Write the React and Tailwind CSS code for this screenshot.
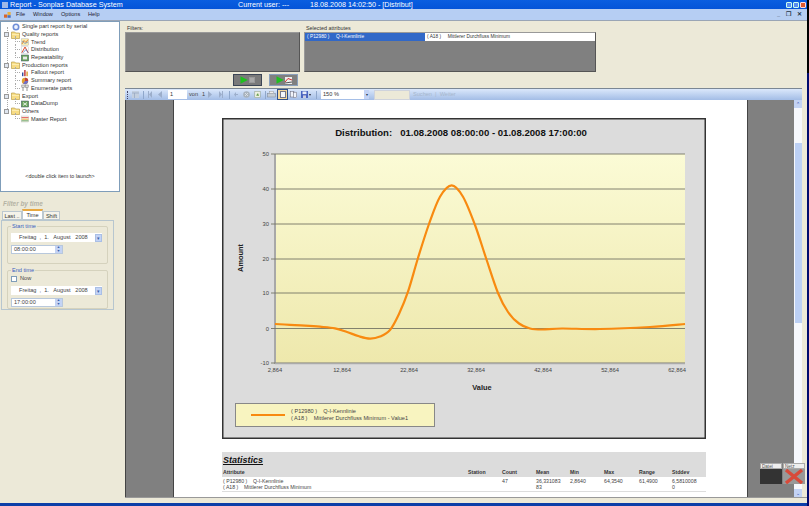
const FONT = { fontFamily: '"Liberation Sans", Arial, sans-serif' };

function Ic({ kind }) {
  if (kind === "folder")
    return (
      <svg viewBox="0 0 9 8" className="w-[9px] h-[8px] shrink-0">
        <path d="M0.5 2V1h3.2l1 1h3.8v5.5h-8z" fill="#f7dc84" stroke="#b09238" strokeWidth="0.6" />
        <path d="M1 3.4h7" stroke="#fff2c0" strokeWidth="0.8" />
      </svg>
    );
  if (kind === "gear")
    return (
      <svg viewBox="0 0 8 8" className="w-[8px] h-[8px] shrink-0">
        <circle cx="4" cy="4" r="2.7" fill="#eef3ff" stroke="#6f8fd8" strokeWidth="1.6" />
      </svg>
    );
  const body = {
    trend: (
      <>
        <rect x="0.3" y="0.8" width="7.4" height="6.4" fill="#f8ecb0" stroke="#aaa" strokeWidth="0.4" />
        <path d="M1 6 L3 2.5 L5 4.5 L7 1.5" fill="none" stroke="#e08030" strokeWidth="0.9" />
        <path d="M1 3 L4 5.5 L7 4" fill="none" stroke="#5080c0" strokeWidth="0.6" />
      </>
    ),
    dist: (
      <>
        <rect x="0.3" y="0.8" width="7.4" height="6.4" fill="#fff" stroke="#bbb" strokeWidth="0.4" />
        <path d="M0.8 6.8 L4 1 L7.2 6.8" fill="none" stroke="#e05030" strokeWidth="1" />
        <path d="M2 6.8 L5 3.5 L7 6.8" fill="none" stroke="#4070c0" strokeWidth="0.7" />
      </>
    ),
    rep: (
      <>
        <rect x="0.3" y="1" width="7.4" height="6" fill="#6aa55c" stroke="#456" strokeWidth="0.5" />
        <rect x="2" y="2.6" width="4" height="2.8" fill="#e8e8e8" />
      </>
    ),
    fall: (
      <>
        <rect x="1" y="3.5" width="1.4" height="3.7" fill="#3050a0" />
        <rect x="3.2" y="1" width="1.4" height="6.2" fill="#c03030" />
        <rect x="5.4" y="2.5" width="1.4" height="4.7" fill="#d9a030" />
      </>
    ),
    sum: (
      <>
        <circle cx="4" cy="4" r="3.2" fill="#e0a030" />
        <path d="M4 4 L4 0.8 A3.2 3.2 0 0 1 7.2 4z" fill="#c04040" />
        <path d="M4 4 L7.2 4 A3.2 3.2 0 0 1 2 6.5z" fill="#7070c8" />
      </>
    ),
    enum: (
      <>
        <rect x="0.8" y="1" width="2.6" height="2.6" fill="#ddd" stroke="#777" strokeWidth="0.5" />
        <rect x="4.6" y="1" width="2.6" height="2.6" fill="#ddd" stroke="#777" strokeWidth="0.5" />
        <path d="M2 3.6v3.4M6 3.6v3.4" stroke="#777" strokeWidth="0.8" />
      </>
    ),
    dump: (
      <>
        <rect x="0.3" y="1" width="7.4" height="6" fill="#6aa55c" stroke="#456" strokeWidth="0.5" />
        <path d="M2 2.5l4 3M6 2.5l-4 3" stroke="#fff" strokeWidth="0.8" />
      </>
    ),
    master: (
      <>
        <rect x="0.3" y="1" width="7.4" height="6" fill="#f8f4e8" stroke="#bbb" strokeWidth="0.4" />
        <path d="M0.5 2.6h7" stroke="#e05050" strokeWidth="0.9" />
        <path d="M0.5 4.2h7" stroke="#e8b040" strokeWidth="0.9" />
        <path d="M0.5 5.8h7" stroke="#60a060" strokeWidth="0.9" />
      </>
    ),
  }[kind];
  return (
    <svg viewBox="0 0 8 8" className="w-[8px] h-[8px] shrink-0">
      {body}
    </svg>
  );
}

const tree = [
  { t: "Single part report by serial", k: "gear", root: true, none: true },
  { t: "Quality reports", k: "folder", root: true },
  { t: "Trend", k: "trend" },
  { t: "Distribution", k: "dist" },
  { t: "Repeatability", k: "rep" },
  { t: "Production reports", k: "folder", root: true },
  { t: "Fallout report", k: "fall" },
  { t: "Summary report", k: "sum" },
  { t: "Enumerate parts", k: "enum" },
  { t: "Export", k: "folder", root: true },
  { t: "DataDump", k: "dump" },
  { t: "Others", k: "folder", root: true },
  { t: "Master Report", k: "master" },
];

function Tree() {
  return (
    <div className="flex flex-col h-[171px] bg-white border border-[#7f9db9] pt-[1px] relative">
      <span className="absolute left-[6px] top-[5px] h-[84px] border-l border-dotted border-[#aaa]" />
      {tree.map((r) => (
        <div key={r.t} className={`relative flex items-center h-[7.7px] gap-[2px] ${r.root ? (r.none ? "pl-[11px]" : "pl-[3px]") : "pl-[20px]"}`}>
          {!r.root && <span className="absolute left-[14px] top-[-2px] w-[5px] h-[6px] border-l border-b border-dotted border-[#aaa]" />}
          {r.root && !r.none && (
            <span className="relative w-[5px] h-[5px] border border-[#9a9a9a] bg-[#dfe6f0] shrink-0" />
          )}
          <Ic kind={r.k} />
          <span className="text-[5.6px] leading-[7px] text-[#333] whitespace-nowrap">{r.t}</span>
        </div>
      ))}
      <div className="mt-[50px] text-center text-[5.4px] leading-[7px] text-[#333]">&lt;double click item to launch&gt;</div>
    </div>
  );
}

function DateField() {
  return (
    <div className="flex items-center w-[91px] h-[9px] bg-white text-[5.6px] text-[#444] pl-[8px]">
      <span className="flex-1 whitespace-pre">Freitag  ,  1.   August   2008</span>
      <span className="w-[7px] h-[8px] bg-[#c3d3f5] border border-[#a9bfe6] text-[#3b5ea8] text-[5px] leading-[6px] text-center">▾</span>
    </div>
  );
}

function TimeField({ v }) {
  return (
    <div className="flex items-center w-[52px] h-[9px] bg-white border border-[#b8c8dc] text-[5.6px] text-[#444] pl-[2px]">
      <span className="flex-1">{v}</span>
      <span className="w-[7px] h-[7px] bg-[#c3d3f5] flex flex-col text-[#3b5ea8] text-[3.5px] leading-[3.5px] text-center">
        <span>▲</span>
        <span>▼</span>
      </span>
    </div>
  );
}

function Group({ label, children, h }) {
  return (
    <div className={`relative ${h} border border-[#d5d2bd] rounded-[2px] pl-[3px] flex flex-col`}>
      <span className="absolute -top-[4px] left-[3px] bg-[#ece9d8] text-[5.6px] leading-[7px] text-[#3a5fc0] px-[1px]">{label}</span>
      {children}
    </div>
  );
}

function LeftPanel() {
  return (
    <div className="w-[120px] shrink-0 flex flex-col">
      <Tree />
      <div className="pl-[3px] pt-[8px] text-[6.4px] leading-[8px] font-bold italic text-[#b5b3a4]">Filter by time</div>
      <div className="flex pl-[2px] mt-[2px] h-[10px] items-end text-[5.6px] text-[#333]">
        <span className="w-[20px] h-[9px] bg-[#f5f3ea] border border-[#bcc8d0] text-center leading-[8px]">Last ..</span>
        <span className="w-[21px] h-[11px] bg-white border border-[#bcc8d0] border-t-2 border-t-[#e8a840] text-center leading-[8px]">Time</span>
        <span className="w-[17px] h-[9px] bg-[#f5f3ea] border border-[#bcc8d0] text-center leading-[8px]">Shift</span>
      </div>
      <div className="ml-[1px] w-[113px] h-[90px] border border-[#b7c6cf] px-[5px] pt-[5px] flex flex-col gap-[6px]">
        <Group label="Start time" h="h-[39px]">
          <div className="pt-[6px] flex flex-col gap-[3px]">
            <DateField />
            <TimeField v="08:00:00" />
          </div>
        </Group>
        <Group label="End time" h="h-[40px]">
          <div className="pt-[4px] flex items-center gap-[3px] h-[11px] text-[5.6px] text-[#444]">
            <span className="w-[6px] h-[6px] bg-white border border-[#7f9db9]" />
            Now
          </div>
          <div className="pt-[4px] flex flex-col gap-[3px]">
            <DateField />
            <TimeField v="17:00:00" />
          </div>
        </Group>
      </div>
    </div>
  );
}

function PlayBtn({ active, icon }) {
  return (
    <div className={`w-[29px] h-[12px] flex items-center justify-center gap-[1px] border ${active ? "bg-[#7a7a7a] border-[#3c4656]" : "bg-[#808080] border-[#8aa0bc]"}`}>
      <svg viewBox="0 0 8 8" className="w-[8px] h-[8px]"><path d="M0.5 0.3 L7.8 4 L0.5 7.7z" fill="#1fc01f" /></svg>
      {icon === "grid" ? (
        <span className="w-[6px] h-[6px] bg-[#a8a8a8] border border-[#999]" />
      ) : (
        <svg viewBox="0 0 7 7" className="w-[7px] h-[7px]">
          <rect width="7" height="7" fill="#eee" />
          <path d="M0 5 L3 1.5 L7 3" stroke="#d03030" fill="none" />
          <path d="M0 6 L7 5" stroke="#555" fill="none" />
        </svg>
      )}
    </div>
  );
}

function Tri({ d, ml }) {
  return (
    <svg viewBox="0 0 4 7" className={`w-[4px] h-[7px] shrink-0 ${ml}`}>
      <path d={d} fill="#9caecb" />
    </svg>
  );
}

function Sep({ ml }) {
  return <span className={`w-[1px] h-[8px] bg-[#8fa7cb] shrink-0 ${ml}`} />;
}

function Toolbar() {
  return (
    <div className="h-[12px] shrink-0 mr-[7px] flex items-center bg-gradient-to-b from-[#dbe8fb] to-[#a3bde6] border-t border-[#7b8794] text-[5.6px] text-[#5a6f90]">
      <span className="w-[1px] h-[8px] ml-[2px] border-l border-dotted border-[#446] shrink-0" />
      <svg viewBox="0 0 7 7" className="w-[7px] h-[7px] ml-[4px] shrink-0"><rect width="7" height="7" fill="#c3cfdf" /><path d="M0 2h7M2.5 2v5" stroke="#93a5c0" strokeWidth="0.7" /></svg>
      <Sep ml="ml-[4px]" />
      <Tri ml="ml-[4px]" d="M0 0h1v7H0z M4 0v7L1 3.5z" />
      <Tri ml="ml-[6px]" d="M4 0v7L0 3.5z" />
      <span className="w-[19px] h-[9px] ml-[6px] bg-white text-[#333] pl-[2px] leading-[9px] shrink-0">1</span>
      <span className="w-[13px] ml-[2px] text-[#444] shrink-0">von</span>
      <span className="w-[4px] text-[#444] shrink-0">1</span>
      <Tri ml="ml-[2px]" d="M0 0v7L4 3.5z" />
      <Tri ml="ml-[7px]" d="M3 0h1v7H3z M0 0v7L3 3.5z" />
      <Sep ml="ml-[6px]" />
      <Tri ml="ml-[4px]" d="M4 1.5v1.5H2V1L0 3.5 2 6V4h2v1z" />
      <svg viewBox="0 0 7 7" className="w-[7px] h-[7px] ml-[5px] shrink-0"><circle cx="3.5" cy="3.5" r="3.3" fill="#a9b3bd" /><path d="M2 2l3 3M5 2L2 5" stroke="#e4e8ee" strokeWidth="0.8" /></svg>
      <svg viewBox="0 0 7 7" className="w-[7px] h-[7px] ml-[4px] shrink-0"><rect x="0.8" y="0.3" width="5.4" height="6.4" fill="#eef2e4" stroke="#8a9a80" strokeWidth="0.5" /><path d="M2 4.5L4 2l1 3z" fill="#6aa050" /></svg>
      <Sep ml="ml-[4px]" />
      <svg viewBox="0 0 9 7" className="w-[9px] h-[7px] ml-[1px] shrink-0"><rect x="0.5" y="2.5" width="8" height="3.5" fill="#c4ccd4" stroke="#7c8694" strokeWidth="0.5" /><rect x="2.5" y="0.3" width="4" height="2.2" fill="#eee" stroke="#888" strokeWidth="0.4" /></svg>
      <span className="w-[11px] h-[11px] ml-[1px] bg-[#f5d79a] border border-[#30508a] flex items-center justify-center shrink-0">
        <span className="w-[6px] h-[7px] bg-[#f4f6fb] border border-[#778]" />
      </span>
      <svg viewBox="0 0 7 7" className="w-[7px] h-[7px] ml-[2px] shrink-0"><rect x="0.3" y="0.5" width="3.6" height="5.5" fill="#f0f3fa" stroke="#667" strokeWidth="0.5" /><rect x="3.4" y="1.2" width="3.3" height="5.5" fill="#f0f3fa" stroke="#667" strokeWidth="0.5" /></svg>
      <svg viewBox="0 0 7 7" className="w-[7px] h-[7px] ml-[4px] shrink-0"><rect width="7" height="7" fill="#4a64c0" /><rect x="1.5" y="0.5" width="4" height="2.6" fill="#e8ecf8" /><rect x="2" y="4.4" width="3" height="2.6" fill="#ccd" /></svg>
      <svg viewBox="0 0 2 2" className="w-[2px] h-[2px] ml-[1px] shrink-0"><path d="M0 0h2L1 2z" fill="#223" /></svg>
      <Sep ml="ml-[5px]" />
      <div className="w-[48px] h-[9px] ml-[4px] bg-white flex items-center text-[#333] pl-[2px] relative shrink-0">
        150 %
        <span className="absolute right-0 top-0 w-[5px] h-[9px] bg-[#c3d3f5] text-[4px] leading-[9px] text-center text-[#234]">▾</span>
      </div>
      <span className="w-[36px] h-[10px] bg-[#ece9d8] ml-[5px] border border-[#cfd3dc] shrink-0" />
      <span className="text-[#a6b6cc] whitespace-pre ml-[3px]">Suchen  |  Weiter</span>
    </div>
  );
}

function catmull(pts) {
  let d = `M${pts[0][0]} ${pts[0][1]}`;
  for (let i = 0; i < pts.length - 1; i++) {
    const p0 = pts[i - 1] || pts[i], p1 = pts[i], p2 = pts[i + 1], p3 = pts[i + 2] || p2;
    const c1 = [p1[0] + (p2[0] - p0[0]) / 6, p1[1] + (p2[1] - p0[1]) / 6];
    const c2 = [p2[0] - (p3[0] - p1[0]) / 6, p2[1] - (p3[1] - p1[1]) / 6];
    d += ` C${c1[0]} ${c1[1]} ${c2[0]} ${c2[1]} ${p2[0]} ${p2[1]}`;
  }
  return d;
}

const curve = [[53, 206], [68, 206.8], [83, 207.6], [98, 208.7], [113, 210.3], [125, 214], [137, 218.3], [148, 220.6], [158, 218.6], [168, 212], [177, 196], [186, 173.7], [196, 140], [207, 106], [218, 78.7], [229.7, 67.3], [241, 78.7], [253, 107], [264, 140], [276, 175], [286, 194], [297, 205.5], [308, 210.5], [320, 211.5], [340, 210.5], [378, 211], [428, 209], [463, 206]];

function Chart() {
  const ys = [[36, "50"], [71, "40"], [106, "30"], [141, "20"], [175, "10"], [210.5, "0"], [245, "-10"]];
  const xs = [[53, "2,864"], [120, "12,864"], [187, "22,864"], [254, "32,864"], [321, "42,864"], [388, "52,864"], [455, "62,864"]];
  return (
    <svg viewBox="0 0 484 321" className="w-[484px] h-[321px] block" style={FONT}>
      <defs>
        <linearGradient id="plot" x1="0" x2="0" y1="0" y2="1">
          <stop offset="0" stopColor="#fbfbd6" />
          <stop offset="1" stopColor="#eee8ac" />
        </linearGradient>
      </defs>
      <rect x="0.75" y="0.75" width="482.5" height="319.5" fill="#dcdcdc" stroke="#333" strokeWidth="1.5" />
      <text x="239" y="18" textAnchor="middle" fontSize="9.6" fontWeight="700" fill="#111" xmlSpace="preserve">Distribution:   01.08.2008 08:00:00 - 01.08.2008 17:00:00</text>
      <rect x="53" y="36" width="410" height="209" fill="url(#plot)" />
      <rect x="52" y="36" width="2" height="210" fill="#a8a8a8" />
      {ys.map(([y, l]) => (
        <g key={l}>
          <line x1="49" x2="463" y1={y} y2={y} stroke="#757565" strokeWidth="0.9" />
          <text x="47" y={y + 2} textAnchor="end" fontSize="5.8" fill="#444">{l}</text>
        </g>
      ))}
      <line x1="53" x2="463" y1="245.5" y2="245.5" stroke="#aaa" strokeWidth="1.5" />
      {xs.map(([x, l]) => (
        <text key={l} x={x} y="254" textAnchor="middle" fontSize="5.8" fill="#444">{l}</text>
      ))}
      <path d={catmull(curve)} fill="none" stroke="#f88a10" strokeWidth="2.2" />
      <text x="260" y="272" textAnchor="middle" fontSize="7.4" fontWeight="700" fill="#222">Value</text>
      <text transform="translate(21 140) rotate(-90)" textAnchor="middle" fontSize="7.4" fontWeight="700" fill="#222">Amount</text>
      <rect x="13.5" y="285.5" width="199" height="23" fill="#f8f4c0" stroke="#888" />
      <line x1="29" x2="63" y1="297" y2="297" stroke="#f88a10" strokeWidth="2" />
      <text x="69" y="295" fontSize="5.6" fill="#444" xmlSpace="preserve">( P12980 )    Q-I-Kennlinie</text>
      <text x="69" y="301" dy="1" fontSize="5.6" fill="#444" xmlSpace="preserve">( A18 )    Mittlerer Durchfluss Minimum - Value1</text>
    </svg>
  );
}

function Stats() {
  const cols = "grid grid-cols-[245px_34px_34px_34px_34px_35px_33px_34px]";
  return (
    <div className="w-[484px] mt-[13px] text-[5.2px] leading-[6px]">
      <div className="bg-[#dcdcdc] h-[25px] flex flex-col">
        <div className="text-[9px] leading-[14px] font-bold italic underline text-[#111] pl-[1px] pt-[1px]">Statistics</div>
        <div className={`${cols} pl-[1px] mt-[2px] font-bold text-[#333]`}>
          <span>Attribute</span><span>Station</span><span>Count</span><span>Mean</span><span>Min</span><span>Max</span><span>Range</span><span>Stddev</span>
        </div>
      </div>
      <div className={`${cols} pl-[1px] pt-[1px] h-[15px] border-b border-[#ddd] text-[#444]`}>
        <span className="whitespace-pre leading-[6px]">{"( P12980 )    Q-I-Kennlinie\n( A18 )    Mittlerer Durchfluss Minimum"}</span>
        <span />
        <span>47</span>
        <span className="whitespace-pre">{"36,331083\n83"}</span>
        <span>2,8640</span>
        <span>64,3540</span>
        <span>61,4900</span>
        <span className="whitespace-pre">{"6,5810008\n0"}</span>
      </div>
    </div>
  );
}

export default function App() {
  return (
    <div className="relative w-[809px] h-[506px] overflow-hidden bg-[#ece9d8] flex flex-col" style={FONT}>
      <div className="h-[9px] shrink-0 flex items-center bg-gradient-to-b from-[#0a5ee0] to-[#0454d8] text-[7.2px] leading-[9px] text-white whitespace-pre">
        <span className="w-[6px] h-[6px] bg-[#9fb8e8] ml-[2px] mr-[2px] shrink-0" />
        <span className="w-[228px]">Report - Sonplas Database System</span>
        <span className="w-[72px]">Current user: ---</span>
        <span className="flex-1">18.08.2008 14:02:50 - [Distribut]</span>
        <span className="flex gap-[1px] mr-[3px]">
          <span className="w-[6px] h-[6px] bg-[#5a8cf0] border border-[#cfe] rounded-[1px]" />
          <span className="w-[6px] h-[6px] bg-[#5a8cf0] border border-[#cfe] rounded-[1px]" />
          <span className="w-[6px] h-[6px] bg-[#e05a30] border border-[#fdd] rounded-[1px]" />
        </span>
      </div>
      <div className="h-[12px] shrink-0 flex items-center bg-[#b6cef3] border-b border-[#9aa5b5] text-[5.6px] text-[#223]">
        <svg viewBox="0 0 7 6" className="w-[7px] h-[6px] ml-[4px] mr-[5px] shrink-0">
          <rect x="0" y="2.5" width="3.2" height="3.2" fill="#d9662a" />
          <rect x="3.5" y="0" width="3.2" height="3.2" fill="#e8b040" />
          <rect x="3.5" y="3.2" width="3.2" height="2.6" fill="#4a70c0" />
        </svg>
        <span className="w-[17px]">File</span>
        <span className="w-[28px]">Window</span>
        <span className="w-[27px]">Options</span>
        <span className="flex-1">Help</span>
        <span className="flex items-center gap-[6px] mr-[7px] text-[#234] font-bold text-[5.6px]">
          <span>_</span>
          <span>❐</span>
          <span>✕</span>
        </span>
      </div>
      <div className="flex flex-1 min-h-0">
        <LeftPanel />
        <div className="flex-1 min-w-0 pl-[5px] flex flex-col">
          <div className="h-[67px] shrink-0 flex flex-col">
            <div className="flex gap-[4px] items-start pt-[3px]">
              <div className="w-[175px]">
                <div className="text-[5.4px] leading-[8px] text-[#333] pl-[2px]">Filters:</div>
                <div className="h-[40px] bg-[#808080] border border-[#555] border-t-[#999] border-l-[#999]" />
              </div>
              <div className="w-[292px]">
                <div className="text-[5.4px] leading-[8px] text-[#333] pl-[2px]">Selected attributes</div>
                <div className="h-[40px] bg-[#808080] border border-[#555] border-t-[#999] border-l-[#999]">
                  <div className="h-[8px] bg-white flex text-[4.8px] leading-[8px] text-[#333] whitespace-pre">
                    <span className="w-[120px] bg-[#3168c8] text-white pl-[2px]">( P12980 )     Q-I-Kennlinie</span>
                    <span className="pl-[2px]">( A18 )     Mittlerer Durchfluss Minimum</span>
                  </div>
                </div>
              </div>
            </div>
            <div className="flex gap-[7px] pl-[108px] mt-[2px]">
              <PlayBtn active icon="grid" />
              <PlayBtn icon="chart" />
            </div>
          </div>
          <Toolbar />
          <div className="flex-1 min-h-0 flex mr-[7px]">
            <div className="flex-1 min-w-0 flex">
              <div className="w-[48px] bg-[#808080] border-l border-[#444]" />
              <div className="w-[574px] bg-white border-l border-[#444] pl-[48px] pt-[18px]">
                <Chart />
                <Stats />
              </div>
              <div className="flex-1 bg-[#808080] border-l border-[#444]" />
            </div>
            <div className="w-[8px] shrink-0 bg-[#f6f8fd] flex flex-col">
              <span className="h-[8px] bg-[#c3d3f5] text-[5px] leading-[8px] text-center text-[#34a]">⌃</span>
              <span className="h-[35px]" />
              <span className="h-[180px] ml-[1px] bg-[#bcd0f5]" />
              <span className="flex-1" />
              <span className="h-[8px] bg-[#c3d3f5] text-[5px] leading-[8px] text-center text-[#34a]">⌄</span>
            </div>
          </div>
          <div className="h-[6px] shrink-0 border-t border-[#999]" />
        </div>
      </div>
      <div className="h-[3px] shrink-0 bg-[#0c3fa8]" />
      <div className="absolute right-0 top-0 w-[2px] h-[73px] bg-black" />
      <div className="absolute right-0 top-[73px] w-[2px] bottom-0 bg-[#000a6e]" />
      <div className="absolute left-[760px] top-[463px] w-[45px] flex gap-[1px] text-[4.6px] leading-[5px] text-[#555]">
        <div className="flex-1">
          <div className="h-[6px] bg-[#eee] border border-[#aaa] pl-[1px]">Datei</div>
          <div className="h-[15px] bg-[#333]" />
        </div>
        <div className="flex-1">
          <div className="h-[6px] bg-[#eee] border border-[#aaa] pl-[1px]">Netz</div>
          <div className="h-[15px] bg-[#999] flex items-center justify-center">
            <svg viewBox="0 0 20 15" className="w-[20px] h-[15px]">
              <path d="M2 1 L18 14 M18 1 L2 14" stroke="#d84a3a" strokeWidth="3.4" />
            </svg>
          </div>
        </div>
      </div>
    </div>
  );
}
